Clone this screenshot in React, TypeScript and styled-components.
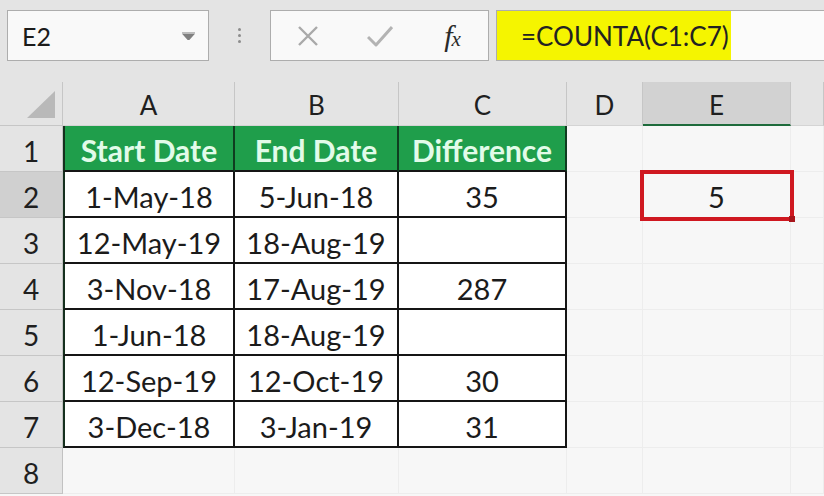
import React from "react";
import styled, { createGlobalStyle, css } from "styled-components";

const GlobalStyle = createGlobalStyle`
  html, body {
    margin: 0;
    padding: 0;
    background: #f7f7f7;
    overflow: hidden;
  }
  body {
    font-family: Lato, "Open Sans", sans-serif;
    color: #1b1b1b;
  }
`;

const Page = styled.div`
  width: 824px;
  height: 496px;
  overflow: hidden;
  background: #f7f7f7;
`;

const Toolbar = styled.div`
  display: flex;
  align-items: flex-start;
  height: 82px;
  box-sizing: border-box;
  padding: 10px 0 0 7px;
  background: #e4e4e4;
`;

const NameBox = styled.div`
  display: flex;
  align-items: center;
  justify-content: space-between;
  width: 202px;
  height: 51px;
  box-sizing: border-box;
  padding: 0 13px 0 14px;
  background: #f9f9f9;
  border: 1px solid #adadad;
  font-size: 25px;
`;

const Dots = styled.div`
  display: flex;
  flex-direction: column;
  align-items: center;
  justify-content: center;
  gap: 3px;
  width: 61px;
  height: 51px;

  span {
    width: 3px;
    height: 3px;
    border-radius: 50%;
    background: #8c8c8c;
  }
`;

const FuncBox = styled.div`
  display: flex;
  width: 219px;
  height: 51px;
  box-sizing: border-box;
  padding-left: 1px;
  background: #f9f9f9;
  border: 1px solid #adadad;
`;

const FuncSlot = styled.div`
  display: flex;
  align-items: center;
  justify-content: center;
  width: 72px;
`;

const Fx = styled.span`
  font-family: "Liberation Serif", "DejaVu Serif", serif;
  font-style: italic;
  font-size: 30px;
  line-height: 1;
  color: #2a2a2a;
  letter-spacing: -1px;

  small {
    font-size: 21px;
  }
`;

const FormulaInput = styled.div`
  display: flex;
  flex: 1;
  height: 51px;
  margin-left: 7px;
  box-sizing: border-box;
  background: #fbfbfb;
  border: 1px solid #adadad;
  border-right: none;
`;

const Highlight = styled.div`
  display: flex;
  align-items: center;
  width: 234px;
  box-sizing: border-box;
  padding-left: 24px;
  background: #f5f500;
  font-size: 26px;
  color: #222;
`;

const Sheet = styled.div`
  display: grid;
  grid-template-columns: 63px 172px 164px 168px 76px 148px 1fr;
  grid-template-rows: 44px repeat(8, 46px);
`;

const Corner = styled.div`
  position: relative;
  background: #e4e4e4;
  border-right: 1px solid #c6c6c6;
  border-bottom: 1px solid #c6c6c6;
  display: flex;
  align-items: flex-end;
  justify-content: flex-end;
  padding: 0 7px 7px 0;
`;

const ColHead = styled.div<{ $selected?: boolean }>`
  display: flex;
  align-items: center;
  justify-content: center;
  padding-top: 3px;
  box-sizing: border-box;
  background: #e4e4e4;
  border-right: 1px solid #c6c6c6;
  border-bottom: 1px solid #d4d4d4;
  font-size: 26px;
  color: #1f1f1f;

  ${(p) =>
    p.$selected &&
    css`
      background: #d2d2d2;
      border-bottom: 2px solid #1e6b3c;
    `}
`;

const RowHead = styled.div<{ $selected?: boolean }>`
  display: flex;
  align-items: center;
  justify-content: center;
  padding-top: 4px;
  box-sizing: border-box;
  background: ${(p) => (p.$selected ? "#d0d0d0" : "#e4e4e4")};
  border-right: 1px solid #c2c2c2;
  border-bottom: 1px solid #c6c6c6;
  font-size: 28px;
  color: #1f1f1f;
`;

const Cell = styled.div<{
  $kind: "title" | "data" | "empty";
  $first?: boolean;
  $raised?: boolean;
}>`
  position: relative;
  z-index: ${(p) => (p.$raised ? 2 : 0)};
  display: flex;
  align-items: center;
  justify-content: center;
  padding-top: 4px;
  box-sizing: border-box;
  font-size: 29px;
  white-space: nowrap;

  ${(p) =>
    p.$kind === "empty" &&
    css`
      background: #f7f7f7;
      border-right: 1px solid #ededed;
      border-bottom: 1px solid #ededed;
    `}

  ${(p) =>
    p.$kind === "data" &&
    css`
      background: #ffffff;
      border-right: 2px solid #151515;
      border-bottom: 2px solid #151515;
    `}

  ${(p) =>
    p.$kind === "title" &&
    css`
      background: #1f9e4b;
      color: #e2fbe9;
      font-size: 30px;
      font-weight: 700;
      border-right: 2px solid #0f3d20;
      border-bottom: 2px solid #151515;
    `}

  ${(p) =>
    p.$first &&
    css`
      border-left: 2px solid #15301e;
    `}
`;

const SelectionBox = styled.div`
  position: absolute;
  top: -2px;
  left: -3px;
  right: -4px;
  bottom: -4px;
  border: 4px solid #cf1820;
  pointer-events: none;

  &::after {
    content: "";
    position: absolute;
    right: -5px;
    bottom: -5px;
    width: 6px;
    height: 6px;
    background: #a8161c;
  }
`;

const CellText = styled.span`
  position: relative;
`;

const cols = ["A", "B", "C", "D", "E", "F"];

const rows: string[][] = [
  ["Start Date", "End Date", "Difference"],
  ["1-May-18", "5-Jun-18", "35"],
  ["12-May-19", "18-Aug-19", ""],
  ["3-Nov-18", "17-Aug-19", "287"],
  ["1-Jun-18", "18-Aug-19", ""],
  ["12-Sep-19", "12-Oct-19", "30"],
  ["3-Dec-18", "3-Jan-19", "31"],
];

const CrossIcon = () => (
  <svg width="22" height="20" viewBox="0 0 22 20">
    <path d="M2 1 L20 19 M20 1 L2 19" stroke="#a9a9a9" strokeWidth="2.4" fill="none" />
  </svg>
);

const CheckIcon = () => (
  <svg width="26" height="22" viewBox="0 0 26 22">
    <path d="M1 12 L9 20 L25 2" stroke="#b3b3b3" strokeWidth="3" fill="none" strokeLinejoin="round" />
  </svg>
);

const DropArrow = () => (
  <svg width="13" height="8" viewBox="0 0 13 8">
    <path d="M0 0 H13 M1 2 H12 L6.5 8 Z" stroke="#808080" strokeWidth="1.2" fill="#808080" />
  </svg>
);

const CornerTriangle = () => (
  <svg width="28" height="27" viewBox="0 0 28 27">
    <polygon points="28,0 28,27 0,27" fill="#b9b9b9" />
  </svg>
);

export default function App() {
  return (
    <Page>
      <GlobalStyle />
      <Toolbar>
        <NameBox>
          <span>E2</span>
          <DropArrow />
        </NameBox>
        <Dots>
          <span />
          <span />
          <span />
        </Dots>
        <FuncBox>
          <FuncSlot>
            <CrossIcon />
          </FuncSlot>
          <FuncSlot>
            <CheckIcon />
          </FuncSlot>
          <FuncSlot>
            <Fx>
              f<small>x</small>
            </Fx>
          </FuncSlot>
        </FuncBox>
        <FormulaInput>
          <Highlight>=COUNTA(C1:C7)</Highlight>
        </FormulaInput>
      </Toolbar>

      <Sheet>
        <Corner>
          <CornerTriangle />
        </Corner>
        {cols.map((c) => (
          <ColHead key={c} $selected={c === "E"}>
            {c === "F" ? "" : c}
          </ColHead>
        ))}

        {Array.from({ length: 8 }, (_, r) => {
          const data = rows[r];
          return (
            <React.Fragment key={r}>
              <RowHead $selected={r === 1}>{r + 1}</RowHead>
              {cols.map((c, ci) => {
                const inTable = data !== undefined && ci < 3;
                const kind = inTable ? (r === 0 ? "title" : "data") : "empty";
                const isE2 = r === 1 && c === "E";
                return (
                  <Cell
                    key={c}
                    $kind={kind}
                    $first={inTable && ci === 0}
                    $raised={isE2}
                  >
                    {inTable && <CellText>{data[ci]}</CellText>}
                    {isE2 && (
                      <>
                        <CellText>5</CellText>
                        <SelectionBox />
                      </>
                    )}
                  </Cell>
                );
              })}
            </React.Fragment>
          );
        })}
      </Sheet>
    </Page>
  );
}
